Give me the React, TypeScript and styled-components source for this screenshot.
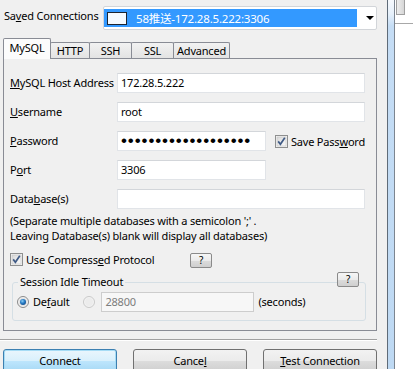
import React from 'react';
import styled, { createGlobalStyle, css } from 'styled-components';

const GlobalStyle = createGlobalStyle`
  html, body {
    margin: 0;
    padding: 0;
    background: #f0f0f0;
  }
  body {
    font-family: "Noto Sans", "Noto Sans CJK SC", sans-serif;
    font-size: 11px;
    letter-spacing: -0.2px;
    color: #000;
    white-space: nowrap;
  }
`;

const Screen = styled.div`
  display: flex;
  width: 413px;
  height: 369px;
  overflow: hidden;
`;

const Main = styled.div`
  width: 374px;
  padding: 0 10px 0 3px;
  display: flex;
  flex-direction: column;

  & > * {
    flex-shrink: 0;
  }
`;

/* ---------- header ---------- */

const Header = styled.div`
  display: flex;
  align-items: flex-start;
  padding-top: 6px;
  height: 32px;
`;

const HeaderLabel = styled.div`
  width: 99px;
  padding-left: 1px;
  line-height: 20px;
`;

const Combo = styled.div`
  box-sizing: border-box;
  width: 274px;
  height: 24px;
  display: flex;
  padding: 2px 0;
  background: #fff;
  border: 1px solid #d2d5d9;
  border-radius: 2px;
`;

const Selection = styled.div`
  width: 253px;
  height: 18px;
  display: flex;
  align-items: center;
  background: #3399ff;
  color: #fff;
  font-size: 11.5px;
`;

const Swatch = styled.span`
  box-sizing: border-box;
  width: 20px;
  height: 13px;
  margin: 0 9px 0 3px;
  background: #f4faff;
  border: 1px solid #1c2430;
`;

const ArrowBox = styled.div`
  flex: 1;
  display: flex;
  align-items: center;
  justify-content: center;
`;

const Arrow = styled.span`
  width: 0;
  height: 0;
  border-left: 4px solid transparent;
  border-right: 4px solid transparent;
  border-top: 4px solid #000;
  margin-left: 6px;
`;

/* ---------- tabs ---------- */

const TabStrip = styled.div`
  display: flex;
  align-items: flex-end;
  height: 20px;
  position: relative;
  z-index: 1;
`;

const Tab = styled.div<{ $active?: boolean; $w: number }>`
  box-sizing: border-box;
  width: ${(p) => p.$w}px;
  height: 16px;
  margin-left: -1px;
  border: 1px solid #898c95;
  border-bottom: none;
  border-radius: 2px 2px 0 0;
  background: linear-gradient(#f2f2f2, #e3e3e3);
  text-align: center;
  line-height: 15px;
  ${(p) =>
    p.$active &&
    css`
      height: 21px;
      margin-left: 0;
      margin-bottom: -1px;
      background: #fcfcfc;
      line-height: 17px;
    `}
`;

const Panel = styled.div`
  box-sizing: border-box;
  height: 273px;
  border: 1px solid #898c95;
  background: #f0f0f0;
  padding: 14px 0 0 6px;
`;

const FormGrid = styled.div`
  display: grid;
  grid-template-columns: 107px auto;
  row-gap: 9px;
  align-items: center;
`;

const Label = styled.div`
  line-height: 20px;
`;

const Field = styled.div<{ $w: number; $disabled?: boolean }>`
  box-sizing: border-box;
  width: ${(p) => p.$w}px;
  height: 20px;
  padding-left: 3px;
  line-height: 18px;
  background: #fff;
  border: 1px solid #e1e4e8;
  border-top-color: #d3d6da;
  overflow: hidden;
  ${(p) =>
    p.$disabled &&
    css`
      background: #f7f7f7;
      border-color: #cdcdcd;
      color: #7d7d7d;
    `}
`;

const Dots = styled.span`
  font-family: "Liberation Sans", sans-serif;
  font-size: 17px;
  letter-spacing: 0.9px;
  line-height: 18px;
`;

const InlineRow = styled.div`
  display: flex;
  align-items: center;
`;

const BoxMark = styled.span<{ $gap: number }>`
  display: inline-flex;
  margin-right: ${(p) => p.$gap}px;
`;

const Note = styled.div`
  margin-top: 4px;
  line-height: 15px;
`;

const CheckRow = styled.div`
  display: flex;
  align-items: center;
  height: 20px;
  margin-top: 6px;
`;

const CheckText = styled.span`
  flex: 0 0 164px;
`;

const HelpButton = styled.div`
  box-sizing: border-box;
  width: 22px;
  height: 15px;
  border: 1px solid #8a8a8a;
  border-radius: 2px;
  background: linear-gradient(#f6f6f6 0%, #ebebeb 50%, #dcdcdc 51%, #cfcfcf 100%);
  font-size: 10px;
  line-height: 13px;
  text-align: center;
  margin-top: 3px;
`;

const GroupBox = styled.div`
  position: relative;
  box-sizing: border-box;
  width: 354px;
  height: 39px;
  margin: 13px 0 0 2px;
  border: 1px solid #d5dfe5;
  border-radius: 3px;
  padding: 8px 0 0 4px;
`;

const GroupTitle = styled.span`
  position: absolute;
  top: -9px;
  left: 5px;
  padding: 0 2px;
  background: #f0f0f0;
  line-height: 16px;
`;

const GroupHelp = styled(HelpButton)`
  position: absolute;
  top: -11px;
  right: 6px;
  margin: 0;
`;

const RadioRow = styled.div`
  display: flex;
  align-items: center;
  height: 21px;
`;

const Gap = styled.span<{ $w: number }>`
  display: inline-block;
  width: ${(p) => p.$w}px;
`;

const Separator = styled.div`
  margin: 8px -10px 0 -3px;
  width: 377px;
  border-top: 1px solid #a0a0a0;
  border-bottom: 1px solid #ffffff;
`;

const ButtonRow = styled.div`
  display: flex;
  justify-content: space-between;
  margin-top: 8px;
`;

const Button = styled.div<{ $default?: boolean }>`
  box-sizing: border-box;
  width: 114px;
  height: 23px;
  border: 1px solid #707070;
  border-radius: 3px;
  background: linear-gradient(#f2f2f2 0%, #ebebeb 50%, #dddddd 51%, #cfcfcf 100%);
  text-align: center;
  line-height: 21px;
  ${(p) =>
    p.$default &&
    css`
      border-color: #3c7fb1;
      box-shadow: inset 0 0 0 1px #a6dcf5;
      background: linear-gradient(#eaf6fd 0%, #d9f0fc 50%, #bee6fd 51%, #a7d9f5 100%);
    `}
`;

/* ---------- right side ---------- */

const Rail = styled.div`
  display: flex;
  flex: 1;
`;

const Strip = styled.div`
  width: 6px;
  border-left: 1px solid #5f6b78;
  border-right: 1px solid #7c8590;
  background: linear-gradient(#f6f9fd 0px, #e6f0fa 14px, #c5ddf5 26px, #bed9f3 100%);
`;

const Outside = styled.div`
  flex: 1;
  background: #fff;
`;

const OutsideTop = styled.div`
  height: 23px;
  border-bottom: 1px solid #a8a8a8;
`;

const Thumb = styled.div`
  box-sizing: border-box;
  width: 9px;
  height: 15px;
  margin-left: 1px;
  border: 1px solid #a0a0a0;
  border-top: none;
  background: linear-gradient(90deg, #ededed, #d6d6d6);
`;

function CheckBox() {
  return (
    <svg width="13" height="13" viewBox="0 0 13 13">
      <defs>
        <linearGradient id="cbg" x1="0" y1="0" x2="1" y2="1">
          <stop offset="0" stopColor="#d8d8d8" />
          <stop offset="1" stopColor="#fbfbfb" />
        </linearGradient>
      </defs>
      <rect x="0.5" y="0.5" width="12" height="12" fill="#f4f4f4" stroke="#8e8f8f" />
      <rect x="2" y="2" width="9" height="9" fill="url(#cbg)" stroke="#c4c4c4" strokeWidth="0.6" />
      <path d="M3.2 6.4 L5.4 9.2 L9.8 2.8" fill="none" stroke="#3f5a85" strokeWidth="1.7" />
    </svg>
  );
}

function Radio({ on }: { on?: boolean }) {
  return (
    <svg width="12" height="12" viewBox="0 0 12 12">
      <defs>
        <radialGradient id="rdot" cx="0.4" cy="0.35" r="0.7">
          <stop offset="0" stopColor="#8fd0f5" />
          <stop offset="0.5" stopColor="#2a7fc8" />
          <stop offset="1" stopColor="#124c8c" />
        </radialGradient>
      </defs>
      <circle cx="6" cy="6" r="5.5" fill={on ? '#f2f2f2' : '#f3f3f3'} stroke={on ? '#8a8a8a' : '#c9c9c9'} />
      <circle cx="6" cy="6" r="4" fill={on ? '#e2e2e2' : '#ececec'} />
      {on && <circle cx="6" cy="6" r="3" fill="url(#rdot)" />}
    </svg>
  );
}

export default function App() {
  return (
    <>
      <GlobalStyle />
      <Screen>
        <Main>
          <Header>
            <HeaderLabel>
              Sa<u>v</u>ed Connections
            </HeaderLabel>
            <Combo>
              <Selection>
                <Swatch />
                58推送-172.28.5.222:3306
              </Selection>
              <ArrowBox>
                <Arrow />
              </ArrowBox>
            </Combo>
          </Header>

          <TabStrip>
            <Tab $active $w={48}>MySQL</Tab>
            <Tab $w={40}>HTTP</Tab>
            <Tab $w={43}>SSH</Tab>
            <Tab $w={43}>SSL</Tab>
            <Tab $w={57}>Advanced</Tab>
          </TabStrip>

          <Panel>
            <FormGrid>
              <Label>
                <u>M</u>ySQL Host Address
              </Label>
              <Field $w={248}>172.28.5.222</Field>

              <Label>
                <u>U</u>sername
              </Label>
              <Field $w={248}>root</Field>

              <Label>
                <u>P</u>assword
              </Label>
              <InlineRow>
                <Field $w={149}>
                  <Dots>{'•'.repeat(19)}</Dots>
                </Field>
                <Gap $w={9} />
                <BoxMark $gap={3}>
                  <CheckBox />
                </BoxMark>
                <span>
                  Save Pass<u>w</u>ord
                </span>
              </InlineRow>

              <Label>
                P<u>o</u>rt
              </Label>
              <Field $w={149}>3306</Field>

              <Label>
                Data<u>b</u>ase(s)
              </Label>
              <Field $w={248} />
            </FormGrid>

            <Note>
              (Separate multiple databases with a semicolon ';' .
              <br />
              Leaving Database(s) blank will display all databases)
            </Note>

            <CheckRow>
              <BoxMark $gap={3}>
                <CheckBox />
              </BoxMark>
              <CheckText>
                Use Compress<u>e</u>d Protocol
              </CheckText>
              <HelpButton>?</HelpButton>
            </CheckRow>

            <GroupBox>
              <GroupTitle>Session Idle Timeout</GroupTitle>
              <GroupHelp>?</GroupHelp>
              <RadioRow>
                <BoxMark $gap={4}>
                  <Radio on />
                </BoxMark>
                <span>
                  De<u>f</u>ault
                </span>
                <Gap $w={14} />
                <BoxMark $gap={6}>
                  <Radio />
                </BoxMark>
                <Field $w={153} $disabled>
                  28800
                </Field>
                <Gap $w={4} />
                <span>(seconds)</span>
              </RadioRow>
            </GroupBox>
          </Panel>

          <Separator />

          <ButtonRow>
            <Button $default>Connect</Button>
            <Button>
              Cance<u>l</u>
            </Button>
            <Button>
              <u>T</u>est Connection
            </Button>
          </ButtonRow>
        </Main>

        <Rail>
          <Strip />
          <Outside>
            <OutsideTop>
              <Thumb />
            </OutsideTop>
          </Outside>
        </Rail>
      </Screen>
    </>
  );
}
